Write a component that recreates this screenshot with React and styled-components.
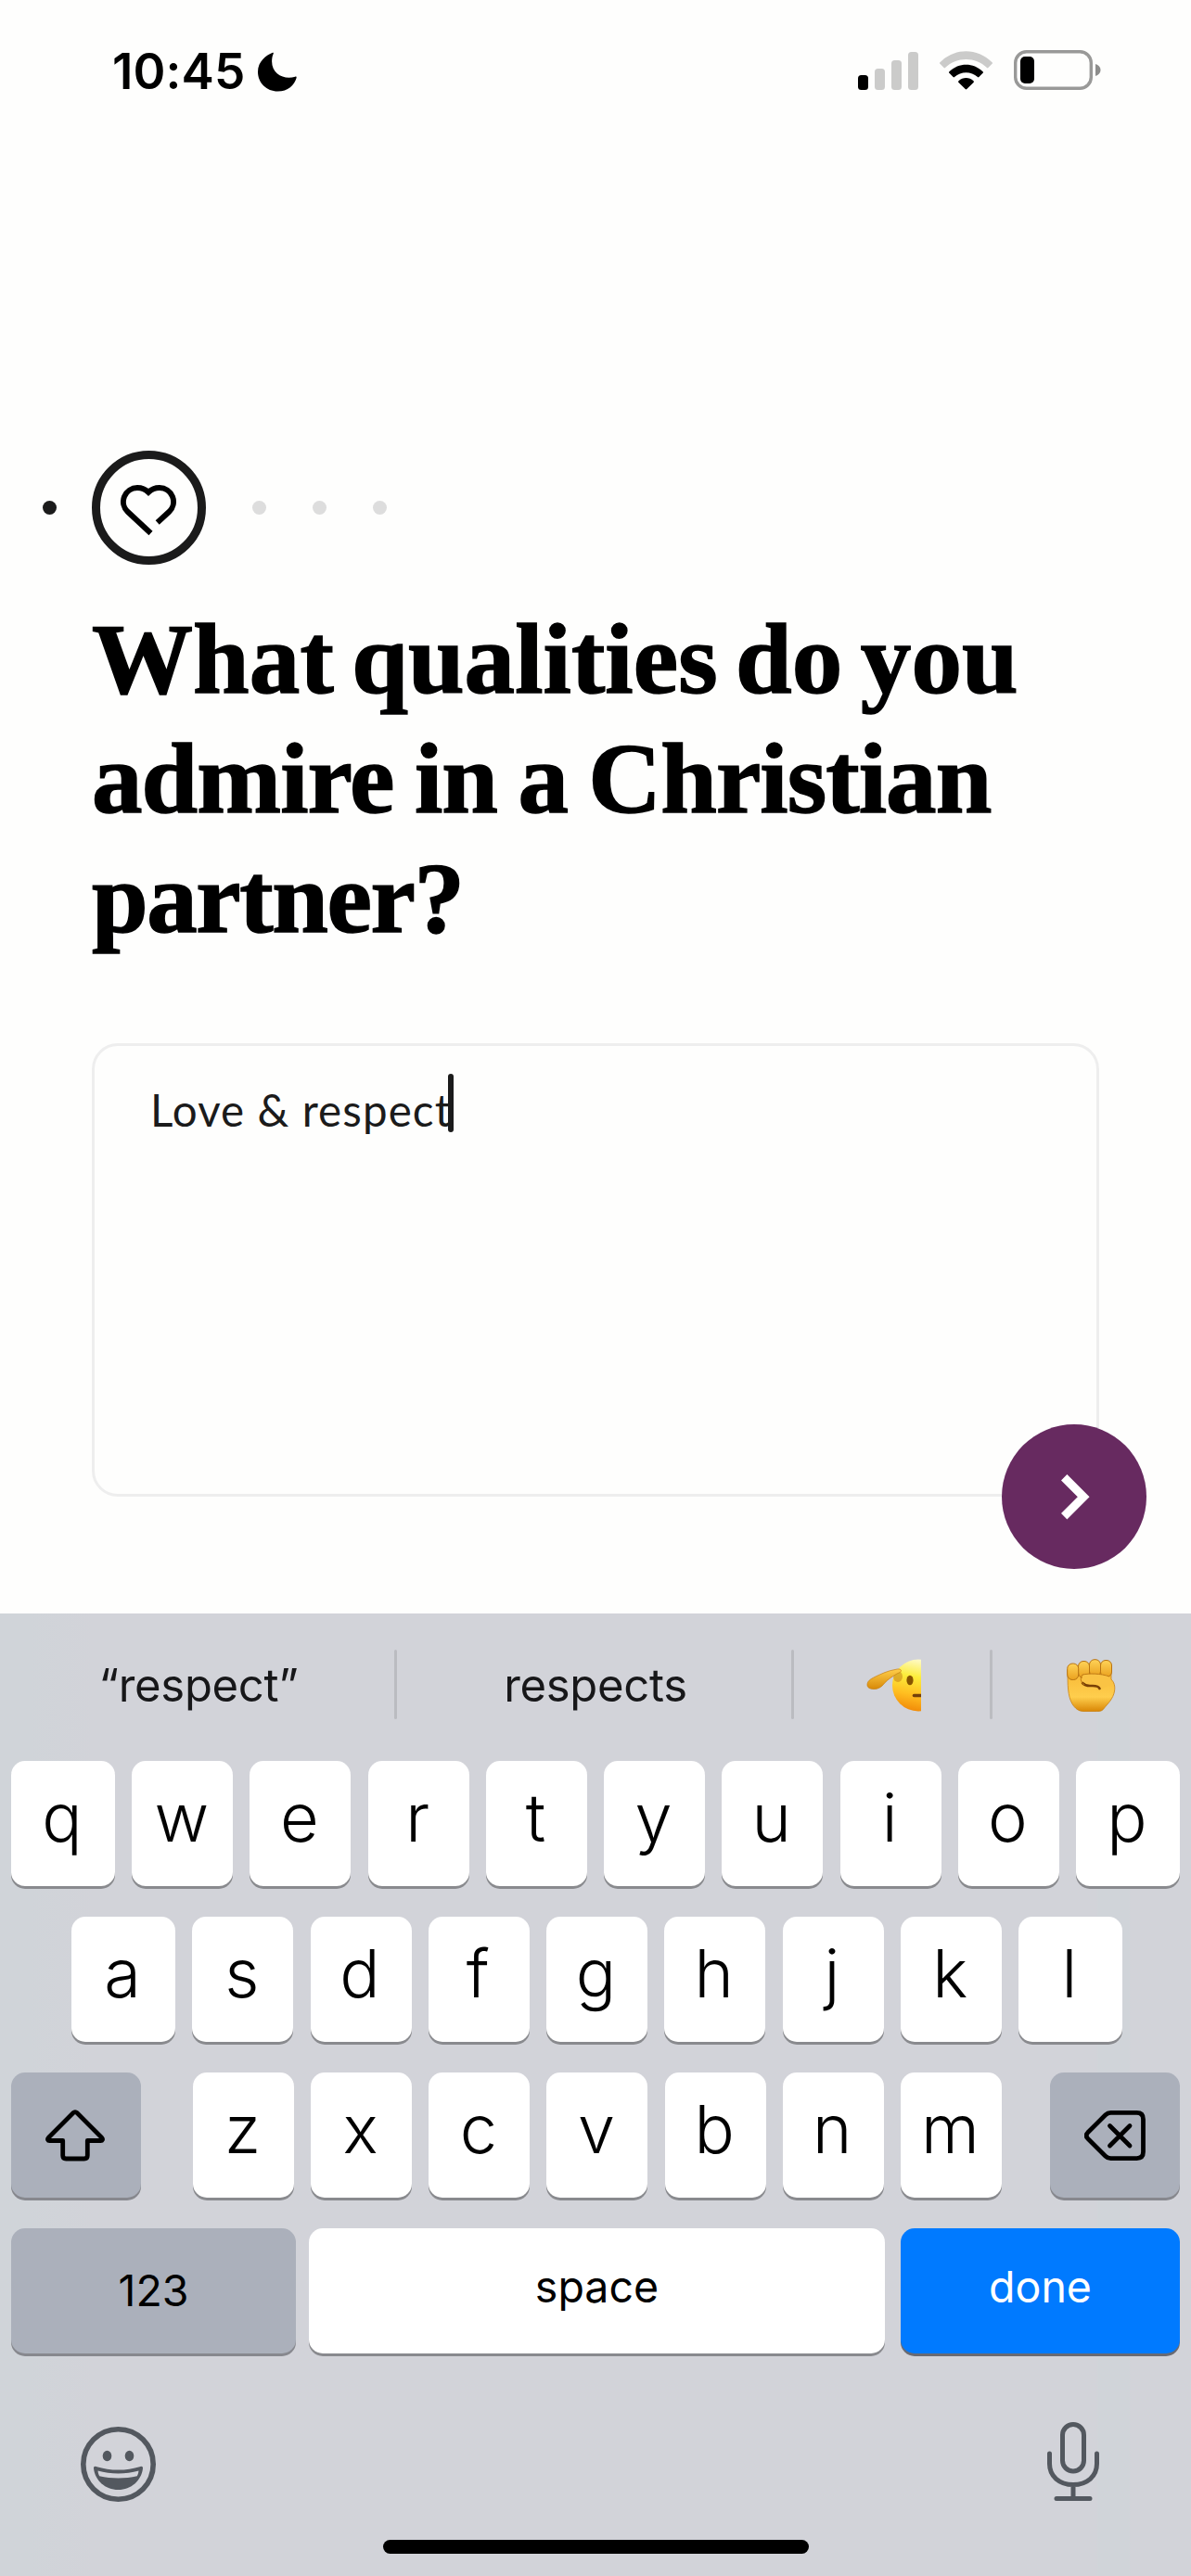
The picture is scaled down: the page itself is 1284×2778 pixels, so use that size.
import React from "react";
import styled, { createGlobalStyle } from "styled-components";

const INK = "#1b1b1b";
const SANS = '"Inter", "Liberation Sans", sans-serif';

const GlobalStyle = createGlobalStyle`
  body { margin: 0; background: #fefefd; }
  * { box-sizing: border-box; }
  svg { display: block; flex: none; }
  button { appearance: none; border: 0; margin: 0; padding: 0; }
`;

const Screen = styled.div`
  width: 1284px;
  height: 2778px;
  display: flex;
  flex-direction: column;
  overflow: hidden;
  background: #fefefd;
  font-family: ${SANS};
`;

const StatusBar = styled.header`
  height: 154px;
  display: flex;
  justify-content: space-between;
  align-items: center;
  padding: 0 97px 0 121px;
`;

const Clock = styled.div`
  display: flex;
  align-items: center;
  gap: 14px;
`;

const Time = styled.span`
  width: 143px;
  font-size: 53px;
  font-weight: 600;
  line-height: 64px;
  letter-spacing: 0.1px;
  white-space: nowrap;
`;

const StatusIcons = styled.div`
  display: flex;
  align-items: flex-end;
  gap: 23px;
  margin-top: -3px;
`;

const Main = styled.main`
  height: 1586px;
  padding: 332px 99px 0;
`;

const Steps = styled.div`
  display: flex;
  align-items: center;
  height: 123px;
  margin-left: -53px;
`;

const Dot = styled.span`
  width: 15px;
  height: 15px;
  margin-right: 50px;
  border-radius: 50%;
  background: #dddddd;
`;

const DoneDot = styled(Dot)`
  margin-right: 38px;
  background: ${INK};
`;

const CurrentStep = styled.span`
  width: 123px;
  height: 123px;
  display: flex;
  align-items: center;
  justify-content: center;
  margin-right: 50px;
  border: 9px solid ${INK};
  border-radius: 50%;
`;

const Question = styled.h1`
  margin: 37px 0 92px;
  font-family: "Liberation Serif", serif;
  font-size: 109px;
  font-weight: 700;
  line-height: 129px;
  color: #000;
  -webkit-text-stroke: 1.5px #000;
`;

const Line = styled.span`
  display: block;
  white-space: nowrap;
  letter-spacing: ${(p) => p.$tracking}px;
  word-spacing: ${(p) => p.$wordGap || 0}px;
`;

const Answer = styled.div`
  position: relative;
  width: 1086px;
  height: 489px;
  display: flex;
  align-items: flex-start;
  padding: 30px 59px;
  border: 3px solid #eeeeee;
  border-radius: 28px;
`;

const AnswerText = styled.span`
  width: 322px;
  padding-top: 7px;
  padding-left: 1px;
  font-family: "Lato", sans-serif;
  font-size: 47.5px;
  line-height: 63px;
  letter-spacing: 1.1px;
  white-space: nowrap;
  color: ${INK};
`;

const Caret = styled.span`
  width: 6px;
  height: 63px;
  border-radius: 3px;
  background: ${INK};
`;

const NextButton = styled.button`
  position: absolute;
  right: -54px;
  bottom: -81px;
  width: 156px;
  height: 156px;
  display: flex;
  align-items: center;
  justify-content: center;
  border-radius: 50%;
  background: #672a60;
`;

const Keyboard = styled.section`
  height: 1038px;
  display: flex;
  flex-direction: column;
  background: linear-gradient(90deg, #d0d4d9 0, #d0d4d9 32px, #d2d3d9 100px, #d2d3d9 1182px, #d0d4d9 1184px, #d0d4d9 1217px, #d2d3d9 1219px);
`;

const Suggestions = styled.div`
  height: 159px;
  display: flex;
  align-items: center;
`;

const Suggestion = styled.div`
  width: ${(p) => p.$width}px;
  height: 100%;
  display: flex;
  align-items: center;
  justify-content: center;
  padding: ${(p) => p.$pad || "0 0 5px 3px"};
  font-size: 49px;
  letter-spacing: -0.3px;
  color: #171719;
`;

const Separator = styled.span`
  width: 3px;
  height: 75px;
  margin-top: -6px;
  border-radius: 2px;
  background: #bbbcc1;
`;

const KeyRow = styled.div`
  display: flex;
  justify-content: space-between;
  padding: ${(p) => p.$pad || "0 12px"};
  margin-bottom: 33px;
`;

const LetterGroup = styled.div`
  width: 872px;
  margin-left: 4px;
  display: flex;
  justify-content: space-between;
`;

const tones = {
  light: { bg: "#ffffff", fg: "#000000", shade: "#898a8e" },
  grey: { bg: "#abb0bb", fg: "#000000", shade: "#87888e" },
  blue: { bg: "#007aff", fg: "#ffffff", shade: "#686a73" },
};

const Key = styled.button`
  width: ${(p) => p.$width || 109}px;
  height: 135px;
  display: flex;
  align-items: center;
  justify-content: center;
  padding-right: ${(p) => p.$nudge || 0}px;
  border-radius: 15px;
  background: ${(p) => tones[p.$tone || "light"].bg};
  color: ${(p) => tones[p.$tone || "light"].fg};
  box-shadow: 0 3px 0 ${(p) => tones[p.$tone || "light"].shade};
  font-family: ${SANS};
`;

const LetterKey = styled(Key)`
  padding: 0 2px 15px 0;
  font-size: 72px;
  font-weight: 330;
`;

const WordKey = styled(Key)`
  margin-right: ${(p) => p.$gapAfter || 0}px;
  padding-bottom: ${(p) => p.$lift || 0}px;
  font-size: 46.5px;
  font-weight: 400;
`;

const KeyboardFooter = styled.div`
  display: flex;
  justify-content: space-between;
  align-items: flex-start;
  height: 168px;
  padding: 41px 99px 0 87px;
`;

const EmojiButton = styled.span`
  padding-top: 5px;
`;

const HomeIndicator = styled.div`
  width: 459px;
  height: 15px;
  margin-left: 413px;
  border-radius: 8px;
  background: #000;
`;

const Moon = () => (
  <svg width="42" height="43" viewBox="0 0 42 43">
    <path d="M16 .8C9 3.400 0 10.300 0 21.500 0 33.500 9.600 42.500 21.400 42.500c11 0 18.100-7 20.200-14.600.3-1-.5-1.500-1.400-1.200C29 30.300 15.100 24.500 15.100 10.300c0-3.600.5-5.900 1.600-8.400.3-.9 0-1.400-.7-1.100Z" />
  </svg>
);

const Signal = () => (
  <svg width="65" height="42" viewBox="0 0 65 42">
    <rect y="26" width="11" height="16" rx="3.500" />
    <g fill="#cbcbca">
      <rect x="18" y="19" width="11" height="23" rx="3.500" />
      <rect x="36" y="10" width="11" height="32" rx="3.500" />
      <rect x="54" y="1" width="11" height="41" rx="3.500" />
    </g>
  </svg>
);

const Wifi = () => (
  <svg width="57" height="42" viewBox="0 0 57 42">
    <path fill="#cbcbca" d="M.4 12.200C16.500-3.800 40.500-3.800 56.600 12.200c.6.600.6 1 0 1.600L52.400 18c-.5.500-.9.500-1.400 0C38.500 5.900 18.500 5.900 6 18c-.5.500-.9.500-1.400 0L.4 13.800c-.6-.6-.6-1 0-1.600Z" />
    <path d="M10.400 22.200c10.400-9.900 25.800-9.900 36.200 0 .6.600.6 1 0 1.600L42.400 28c-.5.500-.9.500-1.400 0-7.200-6.500-17.800-6.500-25 0-.5.500-.9.500-1.400 0l-4.200-4.200c-.6-.6-.6-1 0-1.600Z" />
    <path d="M20.500 32.200c4.600-4.300 11.400-4.300 16 0 .6.600.6 1.100 0 1.700l-7.200 7.200c-.5.500-1.100.5-1.600 0l-7.200-7.200c-.6-.6-.6-1.100 0-1.700Z" />
  </svg>
);

const Battery = () => (
  <svg width="94" height="43" viewBox="0 0 94 43">
    <rect x="1.700" y="1.700" width="81.600" height="39.600" rx="12" fill="none" stroke="#999998" strokeWidth="3.400" />
    <rect x="7" y="7" width="15" height="29" rx="5" />
    <path d="M88 15c3.300 1 5.500 3.300 5.500 6.500S91.300 27 88 28Z" fill="#8d8d8c" />
  </svg>
);

const Heart = () => (
  <svg width="61" height="61" viewBox="0 -5 61 61" fill="none" stroke="#000" strokeWidth="6">
    <path d="M32.500 53 7.800 30A15 15 0 0 1 18 4C22.500 4 26.500 5.300 30 8.800 33.500 5.300 37.500 4 42 4A15 15 0 0 1 52.200 30L39.700 41.500" />
  </svg>
);

const Chevron = () => (
  <svg width="156" height="156" viewBox="0 0 156 156" fill="none" stroke="#fff" strokeWidth="9">
    <path d="M67.200 57.200 88.200 78.200 67.200 99.200" />
  </svg>
);

const Salute = () => (
  <svg width="59" height="57" viewBox="0 0 59 57">
    <defs>
      <linearGradient id="face" x1="0.600" y1="0" x2="0.400" y2="1">
        <stop offset="0" stopColor="#fffbd0" />
        <stop offset=".35" stopColor="#fced3c" />
        <stop offset=".7" stopColor="#ffbd20" />
        <stop offset="1" stopColor="#f18a08" />
      </linearGradient>
      <linearGradient id="hand" x1="0" y1="0" x2="0" y2="1">
        <stop offset="0" stopColor="#ffcf4a" />
        <stop offset="1" stopColor="#d88908" />
      </linearGradient>
    </defs>
    <circle cx="56" cy="28.500" r="28" fill="url(#face)" />
    <ellipse cx="34" cy="19" rx="5" ry="6" fill="#b76a14" opacity=".45" />
    <path d="M1 28c0-4 3-6 8-8.500C16 16 24 12.500 31 11.500c3-.8 6-1 6.500 1 .3 1.500-2 2.500-4 3.200-5 3-10 6-14 10.500-3 4-6.500 6.300-11.500 6.300-4 0-7-1.500-7-4.500Z" fill="url(#hand)" stroke="#c67e12" strokeWidth=".7" />
    <ellipse cx="47" cy="23" rx="3.600" ry="5.200" fill="#875400" />
    <path d="M51.500 39.500H60" stroke="#74400a" strokeWidth="3.600" strokeLinecap="round" />
  </svg>
);

const Fist = () => (
  <svg width="53" height="57" viewBox="0 0 53 57">
    <defs>
      <linearGradient id="palm" x1="0" y1="0" x2="0" y2="1">
        <stop offset="0" stopColor="#f6b735" />
        <stop offset=".65" stopColor="#ffce4d" />
        <stop offset="1" stopColor="#d98706" />
      </linearGradient>
      <linearGradient id="finger" x1="0" y1="0" x2="0" y2="1">
        <stop offset="0" stopColor="#ffd358" />
        <stop offset="1" stopColor="#eaa11e" />
      </linearGradient>
    </defs>
    <path d="M1 12h47v10c3 3 4.500 7 3.500 13-1.500 8-7 13-11 18-2 3-4 3.500-8 3.500H18c-5 0-9-3-12-8C1 40 1 28 1 12Z" fill="url(#palm)" stroke="#c98213" strokeWidth=".8" />
    <g fill="url(#finger)" stroke="#b87312" strokeWidth="1">
      <rect x="36.500" y="1.500" width="12" height="18" rx="5.500" />
      <rect x="24.500" y=".7" width="12" height="18" rx="5.500" />
      <rect x="12.500" y="2.500" width="12" height="18" rx="5.500" />
      <rect x=".7" y="5" width="12" height="17.500" rx="5.500" />
    </g>
    <path d="M18 17c7-1.500 20-1.500 28 2l3 8-15 7c-3-3-8-4-12-5-5-1.500-7-8-4-12Z" fill="#fac344" />
    <path d="M17 26c3 3 6 3.200 9 3 5-.3 8.500.2 9.500 3" fill="none" stroke="#794006" strokeWidth="2.600" strokeLinecap="round" />
    <path d="M17 17c7-1.500 20-1.500 29 2M17 17c-3 4-2 8 2 11" fill="none" stroke="#c17b15" strokeWidth="1" />
  </svg>
);

const Shift = () => (
  <svg width="64" height="56" viewBox="0 0 64 56" fill="none" stroke="#000" strokeWidth="4.800" strokeLinejoin="round">
    <path d="M30 3.500 3.300 30.300c-1.500 1.600-.8 3.200 1.200 3.200h14.200v16c0 2.300 1.200 3.500 3.500 3.500h19.600c2.300 0 3.500-1.200 3.500-3.500v-16h14.200c2 0 2.700-1.600 1.200-3.200L34 3.500c-1.300-1.300-2.700-1.300-4 0Z" />
  </svg>
);

const Backspace = () => (
  <svg width="66" height="54" viewBox="0 0 66 54" fill="none" stroke="#000" strokeWidth="4.800" strokeLinecap="round" strokeLinejoin="round">
    <path d="M28.500 2.400H56.500c4.600 0 7 2.400 7 7v35.200c0 4.600-2.400 7-7 7H28.500c-2.400 0-4-.7-5.700-2.400L3.700 30.200c-2-2.100-2-4.300 0-6.400L22.800 4.800c1.700-1.700 3.300-2.400 5.700-2.400Z" />
    <path d="M27.500 16.500 49 38M49 16.500 27.500 38" />
  </svg>
);

const Smiley = () => (
  <svg width="81" height="81" viewBox="0 0 81 81" fill="#53585f">
    <circle cx="40.500" cy="40.500" r="37.700" fill="none" stroke="#53585f" strokeWidth="5.600" />
    <ellipse cx="28.500" cy="31.500" rx="4.800" ry="5.800" />
    <ellipse cx="52.500" cy="31.500" rx="4.800" ry="5.800" />
    <path fillRule="evenodd" d="M16.500 43c8 2.500 16 3.600 24 3.600s16-1.100 24-3.600c1.500-.5 2.700.4 2.500 2C65.500 58 54.500 68 40.500 68S15.500 58 14 45c-.2-1.600 1-2.500 2.500-2Zm2 4.500c.3 2.400.8 4.200 1.700 5.800 6.500 1.600 13.300 2.200 20.300 2.200s13.800-.6 20.300-2.200c.9-1.600 1.400-3.400 1.700-5.800-7 2-14.500 2.900-22 2.900s-15-.9-22-2.900Z" />
  </svg>
);

const Mic = () => (
  <svg width="56" height="86" viewBox="0 0 56 86" fill="none" stroke="#53585f" strokeWidth="5" strokeLinecap="round">
    <rect x="16.500" y="2.500" width="23" height="50.500" rx="11.500" />
    <path d="M2.500 34v11c0 13.500 10.500 22.500 25.500 22.500S53.500 58.500 53.500 45V34M28 68v14M10 82.500h36" />
  </svg>
);

export default function App() {
  return (
    <>
      <GlobalStyle />
      <Screen>
        <StatusBar>
          <Clock>
            <Time>10:45</Time>
            <Moon />
          </Clock>
          <StatusIcons>
            <Signal />
            <Wifi />
            <Battery />
          </StatusIcons>
        </StatusBar>

        <Main>
          <Steps>
            <DoneDot />
            <CurrentStep>
              <Heart />
            </CurrentStep>
            <Dot />
            <Dot />
            <Dot />
          </Steps>
          <Question>
            <Line $tracking={0.1} $wordGap={-8}>What qualities do you</Line>
            <Line $tracking={-0.9} $wordGap={-4}>admire in a Christian</Line>
            <Line $tracking={-1.4}>partner?</Line>
          </Question>
          <Answer>
            <AnswerText>Love &amp; respect</AnswerText>
            <Caret />
            <NextButton aria-label="Next">
              <Chevron />
            </NextButton>
          </Answer>
        </Main>

        <Keyboard>
          <Suggestions>
            <Suggestion $width={425}>“respect”</Suggestion>
            <Separator />
            <Suggestion $width={425}>respects</Suggestion>
            <Separator />
            <Suggestion $width={211} $pad="0 0 4px 4px">
              <Salute />
            </Suggestion>
            <Separator />
            <Suggestion $width={214} $pad="0 2px 4px 0">
              <Fist />
            </Suggestion>
          </Suggestions>

          <KeyRow>
            {[..."qwertyuiop"].map((c) => (
              <LetterKey key={c} $width={"qp".includes(c) ? 112 : 109}>{c}</LetterKey>
            ))}
          </KeyRow>
          <KeyRow $pad="0 74px 0 77px">
            {[..."asdfghjkl"].map((c) => (
              <LetterKey key={c} $width={"al".includes(c) ? 112 : 109}>{c}</LetterKey>
            ))}
          </KeyRow>
          <KeyRow>
            <Key $tone="grey" $width={140} $nudge={3} aria-label="Shift">
              <Shift />
            </Key>
            <LetterGroup>
              {[..."zxcvbnm"].map((c) => (
                <LetterKey key={c}>{c}</LetterKey>
              ))}
            </LetterGroup>
            <Key $tone="grey" $width={140} aria-label="Delete">
              <Backspace />
            </Key>
          </KeyRow>
          <KeyRow>
            <WordKey $tone="grey" $width={307} $lift={1}>123</WordKey>
            <WordKey $width={621} $lift={10} $gapAfter={3}>space</WordKey>
            <WordKey $tone="blue" $width={301} $lift={10}>done</WordKey>
          </KeyRow>

          <KeyboardFooter>
            <EmojiButton>
              <Smiley />
            </EmojiButton>
            <Mic />
          </KeyboardFooter>
          <HomeIndicator />
        </Keyboard>
      </Screen>
    </>
  );
}
